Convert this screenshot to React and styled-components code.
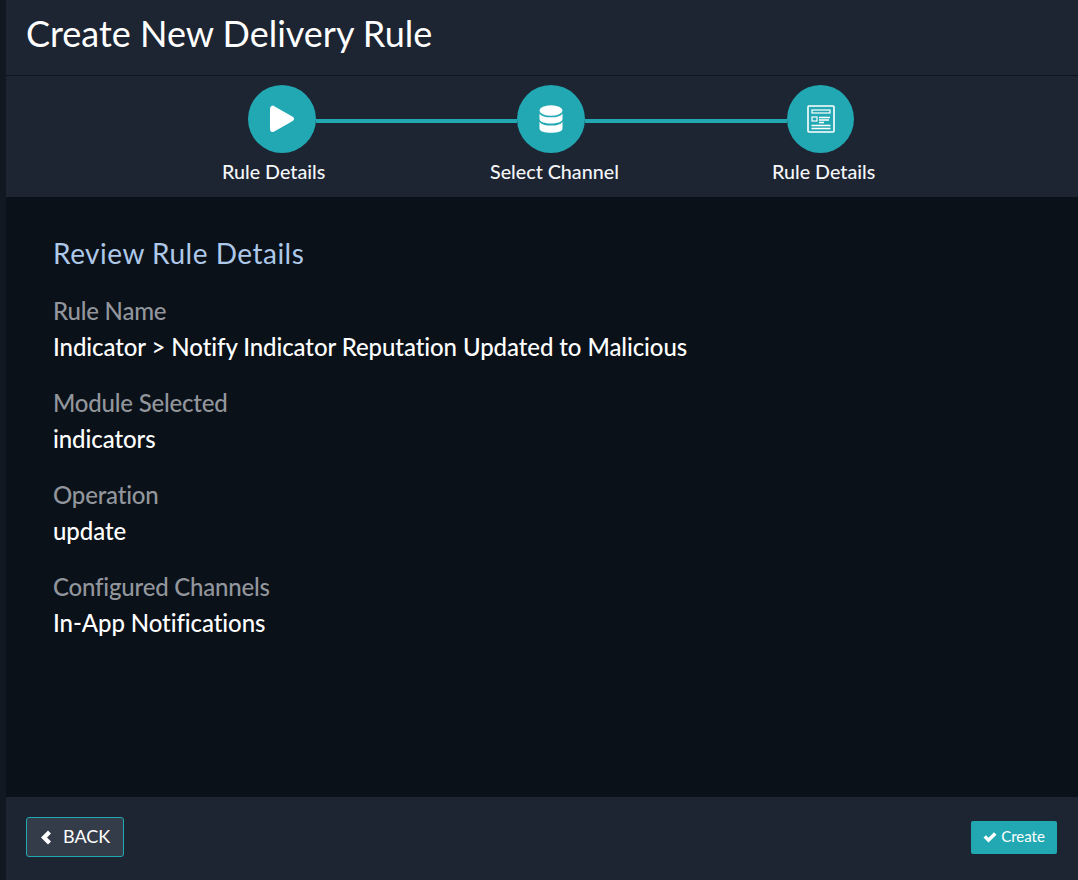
import React from "react";
import styled, { createGlobalStyle } from "styled-components";

const Global = createGlobalStyle`
  html, body { margin: 0; padding: 0; background: #0a1119; }
  body { font-family: Lato, "Liberation Sans", sans-serif; color: #fff; }
  * { box-sizing: border-box; }
`;
const Page = styled.div`
  width: 1078px; height: 880px; display: flex; background: #0c131b;
`;
const Rail = styled.div`
  width: 6px; flex: none; background: #111822;
`;
const Dialog = styled.div`
  flex: 1; display: flex; flex-direction: column; min-width: 0;
`;
const Header = styled.header`
  height: 76px; flex: none; background: #1d2432; border-bottom: 1px solid #0f151e;
  padding: 12px 20px 0; 
`;
const Title = styled.h1`
  margin: 0; font-size: 36px; line-height: 42px; font-weight: 400; color: #fff;
`;
const Stepper = styled.div`
  height: 121px; flex: none; background: #1d2432; padding-top: 9px;
`;
const Track = styled.div`
  display: flex; align-items: center; padding-left: 242px;
`;
const Circle = styled.div`
  width: ${p => p.$w || 68}px; height: 68px; flex: none; border-radius: 50%; background: #22a8b2;
  display: flex; align-items: center; justify-content: center;
`;
const Connector = styled.div`
  width: ${p => p.$w}px; height: 4px; flex: none; background: #22a8b2; margin-top: 4px;
`;
const Labels = styled.div`
  display: flex; margin-top: 8px; padding-left: ${p => p.$left || 0}px;
`;
const StepLabel = styled.div`
  width: ${p => p.$w}px; flex: none; font-size: 19.7px; line-height: 22px; font-weight: 500; white-space: nowrap; color: #f4f6f8;
`;
const Body = styled.main`
  flex: 1; background: #0a1119; padding: 40px 47px 0;
`;
const Heading = styled.h2`
  margin: 0 0 24px; font-size: 28px; line-height: 32px; font-weight: 400; color: #adc8e8; letter-spacing: 0.5px;
`;
const Field = styled.div`
  margin-bottom: 20px;
`;
const FieldLabel = styled.div`
  font-size: 24px; line-height: 36px; font-weight: 500; color: #92969c; letter-spacing: -0.2px;
`;
const FieldValue = styled.div`
  font-size: 24px; line-height: 36px; font-weight: 500; color: #fff; letter-spacing: -0.08px;
`;
const Footer = styled.footer`
  height: 83px; flex: none; background: #1d2432; display: flex; align-items: flex-start; justify-content: space-between;
  padding: 20px 21px 0 20px;
`;
const BackButton = styled.button`
  width: 98px; height: 40px; background: #343c4a; border: 1px solid #22a8b2; border-radius: 3px; color: #fff;
  font: 400 18px Lato, sans-serif; display: flex; align-items: center; padding: 0 0 3px 13px; gap: 11px;
`;
const CreateButton = styled.button`
  margin-top: 4px; width: 86px; height: 33px; background: #22a8b2; border: 0; border-radius: 2px; color: #fff;
  font: 400 15px Lato, sans-serif; display: flex; align-items: center; justify-content: center; gap: 4px; padding: 0 0 4px 0;
`;
const ChevronMark = styled.svg`
  margin-top: 3px;
`;
const CheckMark = styled.svg`
  margin-top: 4px;
`;

const Play = () => (
  <svg width="24" height="28" viewBox="0 0 24 28"><path d="M3.500 0.500C1.500 0.500 0 1.700 0 3.800v20.400c0 2.200 2 3.500 3.800 2.600L22.300 16.200c2.300-1 2.300-3.600 0-4.600L3.800 0.900C3.400 0.700 3.900 0.500 3.500 0.500z" fill="#fff"/></svg>
);
const Database = () => (
  <svg width="24" height="28" viewBox="0 0 24 28" fill="#fff">
    <ellipse cx="12" cy="5.500" rx="11.500" ry="5.200"/>
    <path d="M.5 8.500C2.500 11.700 7 12.300 12 12.300s9.500-.6 11.500-3.800V14C23.500 17 18 18.500 12 18.500S.5 17 .5 14z"/>
    <path d="M.5 16.800C2.500 20 7 20.600 12 20.600s9.500-.6 11.500-3.800V23.500c0 3-5.500 4.300-11.500 4.300S.5 26.500 .5 23.500z" />
  </svg>
);
const Article = () => (
  <svg width="28" height="28" viewBox="0 0 28 28" fill="none" stroke="#fff">
    <rect x="1" y="1" width="26" height="26" rx="1" strokeWidth="1.600"/>
    <rect x="5" y="5" width="18" height="3" strokeWidth="1.200"/>
    <rect x="5" y="12" width="5" height="4" strokeWidth="1.200"/>
    <path d="M12 12.500h11M12 15h10M12 17.500h5M4.500 20.500h19M4.500 23.500h19" strokeWidth="1.600"/>
  </svg>
);
const Chevron = () => (
  <ChevronMark width="12" height="15" viewBox="0 0 12 15"><path d="M8 0.500L1 7.500l7 7 3-3L7 7.500l4-4z" fill="#fff"/></ChevronMark>
);
const Check = () => (
  <CheckMark width="14" height="11" viewBox="0 0 14 11"><path d="M0.500 5.500L3 3.200l2.500 2.500L11 0.300l2.500 2.400L5.500 10.500z" fill="#fff"/></CheckMark>
);

const fields = [
  ["Rule Name", "Indicator > Notify Indicator Reputation Updated to Malicious"],
  ["Module Selected", "indicators"],
  ["Operation", "update"],
  ["Configured Channels", "In-App Notifications"],
];

export default function App() {
  return (
    <Page>
      <Global />
      <Rail />
      <Dialog>
        <Header><Title>Create New Delivery Rule</Title></Header>
        <Stepper>
          <Track>
            <Circle><Play /></Circle>
            <Connector $w={201} />
            <Circle><Database /></Circle>
            <Connector $w={202} />
            <Circle $w={67}><Article /></Circle>
          </Track>
          <Labels $left={216}>
            <StepLabel $w={268}>Rule Details</StepLabel>
            <StepLabel $w={282}>Select Channel</StepLabel>
            <StepLabel $w={110}>Rule Details</StepLabel>
          </Labels>
        </Stepper>
        <Body>
          <Heading>Review Rule Details</Heading>
          {fields.map(([l, v]) => (
            <Field key={l}>
              <FieldLabel>{l}</FieldLabel>
              <FieldValue>{v}</FieldValue>
            </Field>
          ))}
        </Body>
        <Footer>
          <BackButton><Chevron />BACK</BackButton>
          <CreateButton><Check />Create</CreateButton>
        </Footer>
      </Dialog>
    </Page>
  );
}
